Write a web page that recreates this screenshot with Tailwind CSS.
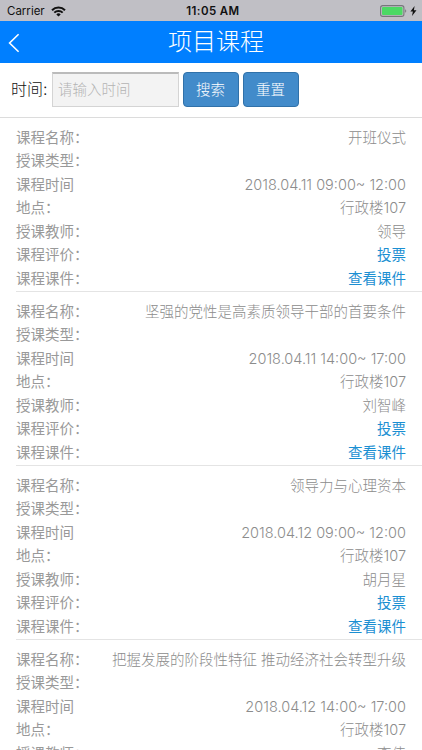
<!DOCTYPE html>
<html lang="zh-CN">
<head>
    <meta charset="UTF-8">
    <meta name="viewport" content="width=device-width, initial-scale=1.0">
    <title>项目课程</title>
    <script src="https://cdn.jsdelivr.net/npm/@tailwindcss/browser@4"></script>
    <style>
        body { font-family: 'Inter', 'Noto Sans CJK SC', sans-serif; }
    </style>
</head>
<body class="h-[750px] overflow-hidden bg-white">
    <!-- Status bar -->
    <div class="grid h-[21px] grid-cols-3 items-center bg-[#c0bfc5] pl-[7px] pr-[5px] text-[11.5px] leading-[21px] text-[#111]">
        <div class="flex items-center gap-[6px] pt-px">
            <span>Carrier</span>
            <svg width="15" height="11" viewBox="0 0 15 11" fill="none" stroke="#111" stroke-width="2">
                <path d="M1 4.2a9.2 9.2 0 0 1 13 0M3.3 6.6a6 6 0 0 1 8.4 0"/>
                <path d="M7.5 10.6 5.3 8.4a3.1 3.1 0 0 1 4.4 0z" fill="#111" stroke="none"/>
            </svg>
        </div>
        <span class="pl-[2px] pt-px text-center text-[11.5px] font-semibold tracking-[0.4px]">11:05 AM</span>
        <div class="flex items-center justify-end gap-[3px]">
            <svg width="27" height="12" viewBox="0 0 27 12">
                <rect x="0.6" y="0.6" width="23.3" height="10.8" rx="2.2" fill="none" stroke="#77777b" stroke-width="1.1"/>
                <rect x="2" y="2" width="20.5" height="8" rx="1" fill="#4cd964"/>
                <path d="M25.2 4.2v3.6c1.4-.6 1.4-3 0-3.6z" fill="#77777b"/>
            </svg>
            <svg width="7" height="10" viewBox="0 0 7 10"><path d="M4.6 0 .4 5.6h2.5L2 10l4.5-5.8H3.9z" fill="#111"/></svg>
        </div>
    </div>

    <!-- Header -->
    <header class="grid h-[42px] grid-cols-[32px_1fr_22px] items-center bg-[#007fff]">
        <a href="#" class="pl-2 pt-[2px]">
            <svg width="12" height="20" viewBox="0 0 12 20" fill="none" stroke="#fff" stroke-width="1.6"><path d="M10.6 1.2 1.6 10l9 8.8"/></svg>
        </a>
        <h1 class="text-center text-2xl leading-[42px] font-light text-white">项目课程</h1>
    </header>

    <!-- Search -->
    <form class="flex h-[55px] items-start border-b border-[#dcdcdc] pl-[11px] pt-[9px]">
        <label for="time" class="w-[41px] text-[16px] leading-[34px] font-light text-[#111]">时间:</label>
        <input id="time" type="text" placeholder="请输入时间" class="h-[35px] w-[127px] border border-t-2 border-[#d4d4d4] border-t-[#bbb] bg-[#f3f3f3] px-[5px] pb-[2px] text-[14.5px] font-light placeholder:text-[#b4b4b4]">
        <button type="button" class="ml-1 h-[35px] w-14 rounded-[4px] border border-[#3071a9] bg-[#428bca] pr-px text-[14.5px] font-light text-white">搜索</button>
        <button type="button" class="ml-1 h-[35px] w-14 rounded-[4px] border border-[#3071a9] bg-[#428bca] pr-px text-[14.5px] font-light text-white">重置</button>
    </form>

    <!-- Course list -->
    <ul id="courseList" class="pl-4"></ul>

    <script>
        const courses = [
            { name: '开班仪式', time: '2018.04.11 09:00~ 12:00', place: '行政楼107', teacher: '领导' },
            { name: '坚强的党性是高素质领导干部的首要条件', time: '2018.04.11 14:00~ 17:00', place: '行政楼107', teacher: '刘智峰' },
            { name: '领导力与心理资本', time: '2018.04.12 09:00~ 12:00', place: '行政楼107', teacher: '胡月星' },
            { name: '把握发展的阶段性特征 推动经济社会转型升级', time: '2018.04.12 14:00~ 17:00', place: '行政楼107', teacher: '李伟' }
        ];

        function row(label, value) {
            return `<div class="flex h-[23.5px] items-center justify-between whitespace-nowrap">
                <span class="text-[#999]">${label}</span>${value}
            </div>`;
        }

        function text(value) {
            return `<span class="font-light text-[#8c8c8c]">${value}</span>`;
        }

        function link(value) {
            return `<a href="#" class="text-[#1b8fd2]">${value}</a>`;
        }

        document.getElementById('courseList').innerHTML = courses.map(course => `
            <li class="h-[174px] border-b border-[#e4e4e4] pr-4 pt-[7.6px] text-[14.5px] leading-[23.5px]">
                ${row('课程名称：', text(course.name))}
                ${row('授课类型：', '')}
                ${row('课程时间', text(course.time))}
                ${row('地点：', text(course.place))}
                ${row('授课教师：', text(course.teacher))}
                ${row('课程评价：', link('投票'))}
                ${row('课程课件：', link('查看课件'))}
            </li>`).join('');
    </script>
</body>
</html>
